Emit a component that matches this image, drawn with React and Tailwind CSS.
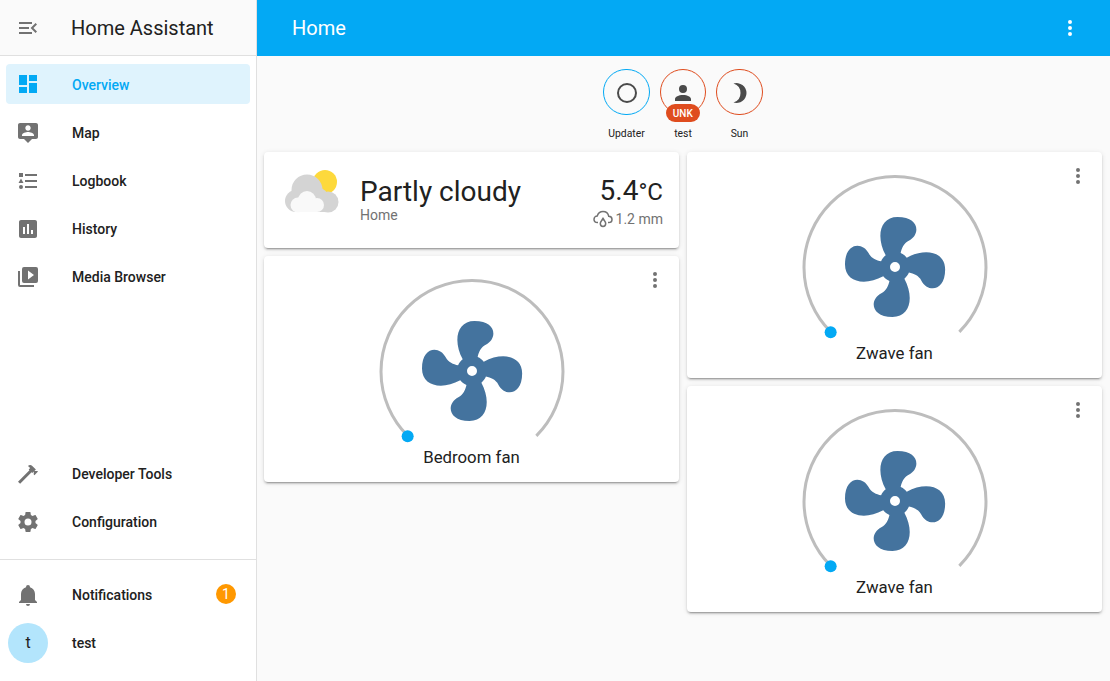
const icons = {
  menuOpen: 'M21,15.61L19.59,17L14.58,12L19.59,7L21,8.39L17.44,12L21,15.61M3,6H16V8H3V6M3,13V11H13V13H3M3,18V16H16V18H3Z',
  dashboard: 'M13,3V9H21V3M13,21H21V11H13M3,21H11V15H3M3,13H11V3H3V13Z',
  map: 'M20 2H4C2.9 2 2 2.9 2 4V16C2 17.11 2.9 18 4 18H8L12 22L16 18H20C21.11 18 22 17.11 22 16V4C22 2.9 21.11 2 20 2M12 4.3C13.5 4.3 14.7 5.5 14.7 7S13.5 9.7 12 9.7 9.3 8.5 9.3 7 10.5 4.3 12 4.3M18 15H6V14.1C6 12.1 10 11 12 11S18 12.1 18 14.1V15Z',
  logbook: 'M5,9.5L7.5,14H2.5L5,9.5M3,4H7V8H3V4M5,20A2,2 0 0,0 7,18A2,2 0 0,0 5,16A2,2 0 0,0 3,18A2,2 0 0,0 5,20M9,5V7H21V5H9M9,19H21V17H9V19M9,13H21V11H9V13Z',
  history: 'M19 3H5C3.9 3 3 3.9 3 5V19C3 20.1 3.9 21 5 21H19C20.1 21 21 20.1 21 19V5C21 3.9 20.1 3 19 3M9 17H7V10H9V17M13 17H11V7H13V17M17 17H15V13H17V17Z',
  media: 'M4,6H2V20A2,2 0 0,0 4,22H18V20H4V6M20,2H8A2,2 0 0,0 6,4V16A2,2 0 0,0 8,18H20A2,2 0 0,0 22,16V4A2,2 0 0,0 20,2M12,14.5V5.5L18,10L12,14.5Z',
  hammer: 'M2 19.63L13.43 8.2L12.72 7.5L14.14 6.07L12 3.89C13.2 2.7 15.09 2.7 16.27 3.89L19.87 7.5L18.45 8.91H21.29L22 9.62L18.45 13.21L17.74 12.5V9.62L16.27 11.04L15.56 10.33L4.13 21.76L2 19.63Z',
  cog: 'M12,15.5A3.5,3.5 0 0,1 8.5,12A3.5,3.5 0 0,1 12,8.5A3.5,3.5 0 0,1 15.5,12A3.5,3.5 0 0,1 12,15.5M19.43,12.97C19.47,12.65 19.5,12.33 19.5,12C19.5,11.67 19.47,11.34 19.43,11L21.54,9.37C21.73,9.22 21.78,8.95 21.66,8.73L19.66,5.27C19.54,5.05 19.27,4.96 19.05,5.05L16.56,6.05C16.04,5.66 15.5,5.32 14.87,5.07L14.5,2.42C14.46,2.18 14.25,2 14,2H10C9.75,2 9.54,2.18 9.5,2.42L9.13,5.07C8.5,5.32 7.96,5.66 7.44,6.05L4.95,5.05C4.73,4.96 4.46,5.05 4.34,5.27L2.34,8.73C2.21,8.95 2.27,9.22 2.46,9.37L4.57,11C4.53,11.34 4.5,11.67 4.5,12C4.5,12.33 4.53,12.65 4.57,12.97L2.46,14.63C2.27,14.78 2.21,15.05 2.34,15.27L4.34,18.73C4.46,18.95 4.73,19.03 4.95,18.95L7.44,17.94C7.96,18.34 8.5,18.68 9.13,18.93L9.5,21.58C9.54,21.82 9.75,22 10,22H14C14.25,22 14.46,21.82 14.5,21.58L14.87,18.93C15.5,18.67 16.04,18.34 16.56,17.94L19.05,18.95C19.27,19.03 19.54,18.95 19.66,18.73L21.66,15.27C21.78,15.05 21.73,14.78 21.54,14.63L19.43,12.97Z',
  bell: 'M21,19V20H3V19L5,17V11C5,7.9 7.03,5.17 10,4.29C10,4.19 10,4.1 10,4A2,2 0 0,1 12,2A2,2 0 0,1 14,4C14,4.1 14,4.19 14,4.29C16.97,5.17 19,7.9 19,11V17L21,19M14,21A2,2 0 0,1 12,23A2,2 0 0,1 10,21',
  dots: 'M12,16A2,2 0 0,1 14,18A2,2 0 0,1 12,20A2,2 0 0,1 10,18A2,2 0 0,1 12,16M12,10A2,2 0 0,1 14,12A2,2 0 0,1 12,14A2,2 0 0,1 10,12A2,2 0 0,1 12,10M12,4A2,2 0 0,1 14,6A2,2 0 0,1 12,8A2,2 0 0,1 10,6A2,2 0 0,1 12,4Z',
  circle: 'M12,20A8,8 0 0,1 4,12A8,8 0 0,1 12,4A8,8 0 0,1 20,12A8,8 0 0,1 12,20M12,2A10,10 0 0,0 2,12A10,10 0 0,0 12,22A10,10 0 0,0 22,12A10,10 0 0,0 12,2Z',
  account: 'M12,4A4,4 0 0,1 16,8A4,4 0 0,1 12,12A4,4 0 0,1 8,8A4,4 0 0,1 12,4M12,14C16.42,14 20,15.79 20,18V20H4V18C4,15.79 7.58,14 12,14Z',
  moon: 'M18.5 12A10 10 0 0 1 5.5 21.54A10 10 0 0 0 5.5 2.46A10 10 0 0 1 18.5 12Z',
  fan: 'M12,11A1,1 0 0,0 11,12A1,1 0 0,0 12,13A1,1 0 0,0 13,12A1,1 0 0,0 12,11M12.5,2C17,2 17.11,5.57 14.75,6.75C13.76,7.24 13.32,8.29 13.13,9.22C13.61,9.42 14.03,9.73 14.35,10.13C18.05,8.13 22.03,8.92 22.03,12.5C22.03,17 18.46,17.1 17.28,14.73C16.78,13.74 15.72,13.3 14.79,13.11C14.59,13.59 14.28,14 13.88,14.34C15.87,18.03 15.08,22 11.5,22C7,22 6.91,18.42 9.27,17.24C10.25,16.75 10.69,15.71 10.89,14.79C10.4,14.59 9.97,14.27 9.65,13.87C5.96,15.85 2,15.07 2,11.5C2,7 5.56,6.89 6.74,9.26C7.24,10.25 8.29,10.68 9.22,10.87C9.41,10.39 9.73,9.97 10.14,9.65C8.15,5.96 8.94,2 12.5,2Z',
};

function Icon({ d, className = '' }) {
  return (
    <svg viewBox="0 0 24 24" className={`w-6 h-6 shrink-0 fill-current ${className}`}>
      <path d={d} />
    </svg>
  );
}

function NavItem({ icon, label, active }) {
  return (
    <div className={`h-10 mx-[6px] pl-[10px] rounded flex items-center ${active ? 'bg-[#dff3fd] mb-[1px]' : ''}`}>
      <Icon d={icon} className={active ? 'text-[#03a9f4]' : 'text-[#727272]'} />
      <span className={`ml-8 text-sm font-medium ${active ? 'text-[#03a9f4] pt-[2px]' : 'text-[#212121]'}`}>{label}</span>
    </div>
  );
}

function Sidebar() {
  return (
    <aside className="w-[257px] shrink-0 h-full bg-white border-r border-[#e0e0e0] flex flex-col">
      <div className="h-14 shrink-0 bg-[#fafafa] border-b border-[#e0e0e0] flex items-center pl-4">
        <Icon d={icons.menuOpen} className="text-[#727272]" />
        <span className="ml-[31px] text-xl text-[#212121]">Home Assistant</span>
      </div>
      <nav className="flex-1 flex flex-col gap-2 pt-2">
        <NavItem icon={icons.dashboard} label="Overview" active />
        <NavItem icon={icons.map} label="Map" />
        <NavItem icon={icons.logbook} label="Logbook" />
        <NavItem icon={icons.history} label="History" />
        <NavItem icon={icons.media} label="Media Browser" />
      </nav>
      <div className="flex flex-col gap-2 pb-[17px]">
        <NavItem icon={icons.hammer} label="Developer Tools" />
        <NavItem icon={icons.cog} label="Configuration" />
      </div>
      <div className="border-t border-[#e0e0e0] pt-[15px] pb-[18px] flex flex-col gap-2">
        <div className="relative">
          <NavItem icon={icons.bell} label="Notifications" />
          <span className="absolute right-5 top-[9px] w-5 h-5 rounded-full bg-[#ff9800] text-white text-sm flex items-center justify-center">1</span>
        </div>
        <div className="h-10 pl-2 flex items-center">
          <span className="w-10 h-10 rounded-full bg-[#b3e5fc] text-[#212121] text-base flex items-center justify-center">t</span>
          <span className="ml-6 text-sm font-medium text-[#212121]">test</span>
        </div>
      </div>
    </aside>
  );
}

function Badge({ icon, label, color, pill }) {
  return (
    <div className="w-[46.5px] flex flex-col items-center">
      <div className={`relative w-[46.5px] h-[46.5px] pt-[2px] rounded-full border flex items-center justify-center text-[#4a4a4a] ${color}`}>
        <Icon d={icon} />
        {pill && (
          <span className="absolute left-[5px] top-[34.5px] w-[34px] h-[18px] rounded-[9px] bg-[#df4c1e] text-white text-[10px] font-medium flex items-center justify-center">
            {pill}
          </span>
        )}
      </div>
      <span className="mt-[10.5px] leading-4 text-[10.4px] whitespace-nowrap text-[#212121]">{label}</span>
    </div>
  );
}

function WeatherIcon() {
  return (
    <svg viewBox="0 0 64 55" className="w-16 h-[55px] shrink-0">
      <circle cx="44" cy="17" r="12" fill="#fdd93c" />
      <g fill="#d4d4d4">
        <circle cx="26" cy="25" r="15.5" />
        <circle cx="15" cy="36" r="11" />
        <circle cx="47" cy="37" r="10.5" />
        <circle cx="38" cy="32" r="9" />
        <rect x="15" y="35" width="32" height="12" />
      </g>
      <g fill="#f9f9f9">
        <circle cx="26" cy="35" r="9" />
        <circle cx="17" cy="40" r="7.5" />
        <circle cx="36" cy="40" r="7" />
        <rect x="17" y="38" width="19" height="9" />
      </g>
    </svg>
  );
}

function WeatherCard() {
  return (
    <div className="h-24 rounded bg-white shadow-[0_2px_2px_0_rgba(0,0,0,0.14),0_1px_5px_0_rgba(0,0,0,0.12),0_3px_1px_-2px_rgba(0,0,0,0.2)] flex items-start pl-[17px] pr-4 pt-[13px]">
      <WeatherIcon />
      <div className="ml-[15px] pt-[10px] flex-1">
        <div className="text-[28px] leading-[34px] text-[#212121]">Partly cloudy</div>
        <div className="-mt-[4px] text-sm leading-5 text-[#727272]">Home</div>
      </div>
      <div className="pt-[9px] flex flex-col items-end">
        <div className="leading-[34px] text-[#212121]">
          <span className="text-[28px]">5.4</span>
          <span className="text-2xl">°C</span>
        </div>
        <div className="-mt-[3px] flex items-center text-sm leading-5 text-[#727272]">
          <svg viewBox="0 0 20 18" className="w-5 h-[18px] mr-[3px] fill-none stroke-[#727272] stroke-[1.5]">
            <path d="M5 12.5H4.5C2.5 12.5 1 11 1 9.2S2.5 6 4.2 6C5 3.5 7.2 1.5 10 1.5C13 1.5 15.2 3.7 15.7 6.2C17.6 6.3 19 7.7 19 9.4S17.5 12.5 15.6 12.5H15" />
            <path d="M10 8.5C11 10.2 12.7 11.7 12.7 13.6C12.7 15.2 11.5 16.5 10 16.5S7.3 15.2 7.3 13.6C7.3 11.7 9 10.2 10 8.5Z" />
          </svg>
          1.2 mm
        </div>
      </div>
    </div>
  );
}

function FanCard({ name }) {
  return (
    <div className="relative h-[226px] rounded bg-white shadow-[0_2px_2px_0_rgba(0,0,0,0.14),0_1px_5px_0_rgba(0,0,0,0.12),0_3px_1px_-2px_rgba(0,0,0,0.2)] flex flex-col items-center pt-5">
      <button className="absolute top-3 right-3 text-[#727272]">
        <Icon d={icons.dots} />
      </button>
      <svg viewBox="0 0 190 168" className="w-[190px] h-[168px]">
        <path d="M30.65 159.85A91 91 0 1 1 159.35 159.85" fill="none" stroke="#bdbdbd" strokeWidth="3" />
        <circle cx="30.65" cy="160.35" r="6" fill="#03a9f4" />
        <svg x="35" y="35" width="120" height="120" viewBox="0 0 24 24">
          <path d={icons.fan} fill="#44739e" />
        </svg>
      </svg>
      <div className="mt-[1px] text-[16.8px] leading-6 text-[#212121]">{name}</div>
    </div>
  );
}

export default function App() {
  return (
    <div className="h-screen w-full flex overflow-hidden bg-[#fafafa] font-['Roboto',sans-serif]">
      <Sidebar />
      <main className="flex-1 min-w-0 flex flex-col">
        <header className="h-14 shrink-0 bg-[#03a9f4] text-white flex items-center justify-between pl-[35px] pr-[28px]">
          <span className="text-xl">Home</span>
          <Icon d={icons.dots} />
        </header>
        <div className="h-24 shrink-0 flex justify-center gap-[10px] pt-[12.5px] pr-[1px]">
          <Badge icon={icons.circle} label="Updater" color="border-[#03a9f4]" />
          <Badge icon={icons.account} label="test" color="border-[#df4c1e]" pill="UNK" />
          <Badge icon={icons.moon} label="Sun" color="border-[#df4c1e]" />
        </div>
        <div className="grid grid-cols-2 gap-2 pl-[7px] pr-2">
          <div className="flex flex-col gap-2">
            <WeatherCard />
            <FanCard name="Bedroom fan" />
          </div>
          <div className="flex flex-col gap-2">
            <FanCard name="Zwave fan" />
            <FanCard name="Zwave fan" />
          </div>
        </div>
      </main>
    </div>
  );
}
